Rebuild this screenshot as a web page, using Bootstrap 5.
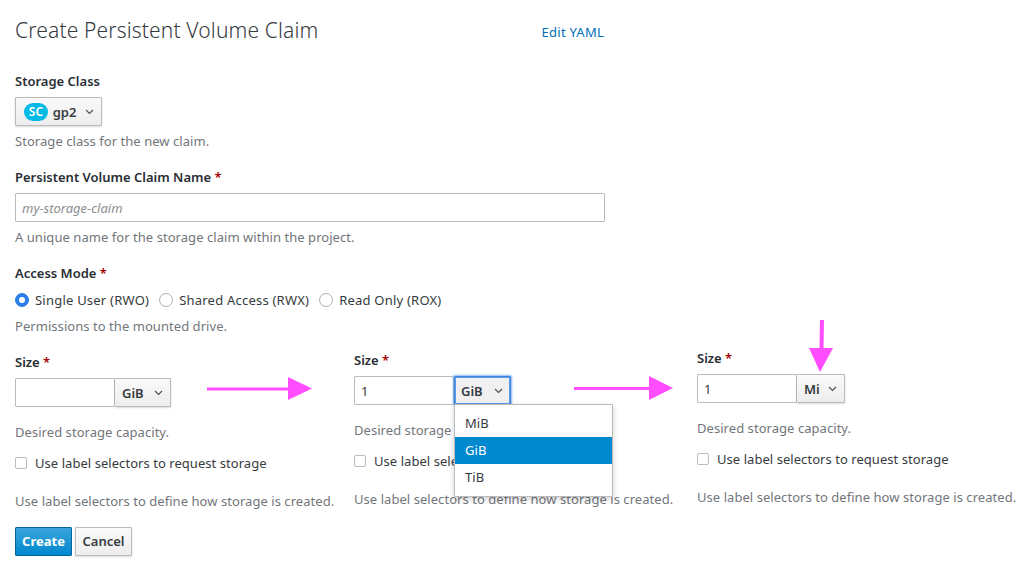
<!DOCTYPE html>
<html lang="en">
<head>
<meta charset="utf-8">
<title>Create Persistent Volume Claim</title>
<link href="https://cdn.jsdelivr.net/npm/bootstrap@5.3.0/dist/css/bootstrap.min.css" rel="stylesheet">
<style>
html,body{height:574px;overflow:hidden}
body{background:#fff;font-family:"Noto Sans","Liberation Sans",sans-serif;font-size:13px;line-height:18px;color:#363b40;position:relative;letter-spacing:.05px}
.pg{padding:0 0 0 15px}
.top-form{width:590px}
.head-row{height:72px;padding-top:16px}
.pg-title{font-size:21px;line-height:28px;font-weight:300;margin:0;color:#363b40;font-family:"Noto Sans",sans-serif;letter-spacing:.15px}
.yaml{color:#0070b8;text-decoration:none;padding-top:7px;letter-spacing:.25px;margin-right:1px}
.fld-label{display:block;font-weight:600;margin:0 0 7px;color:#292e34;line-height:18px;letter-spacing:0}
.req{color:#a30000}
.help{color:#72767b;margin:6px 0 0;line-height:18px}
.blk{margin-bottom:18px}
.drop-btn{height:29px;background:linear-gradient(#fafafa,#ededed);border:1px solid #bbb;border-radius:1px;box-shadow:0 1px 2px rgba(0,0,0,.15);font-size:13px;color:#363b40;font-weight:600;padding:0 7px;display:inline-flex;align-items:center;justify-content:space-between}
.class-btn{width:87px}
.sc-pill{background:#00b9e4;color:#fff;border-radius:10px;width:24px;height:18px;font-size:12px;font-weight:600;display:inline-flex;align-items:center;justify-content:center;margin-left:1px;margin-right:-4px}
.txt-in{height:29px;border:1px solid #bbb;border-radius:1px;font-size:13px;padding:0 6px;box-shadow:none;color:#363b40}
.txt-in::placeholder{font-style:italic;color:#8b8d8f}
.radio-row{height:18px;margin-top:9px}
.radio-row .form-check-input,.chk .form-check-input{margin:0;flex:none}
.radio-txt{margin-left:6px;margin-right:10px;letter-spacing:.22px}
.form-check-input[type=radio]{width:14px;height:14px;border-color:#b0b0b0}
.form-check-input[type=radio]:checked{background-color:#2b7de9;border-color:#2b7de9}
.chk{height:18px;margin-top:13px}
.chk .form-check-input{width:12px;height:12px;border-color:#bbb;border-radius:2px}
.size-row{display:flex}
.sc1{width:339px}
.sc2{width:343px;margin-top:-2px}
.sc3{margin-top:-4px}
.size-in{width:100px;flex:none}
.size-btn{border-left:0;width:56px}
.size-btn-sm{width:48px}
.help-a{margin-top:16px}
.help-b{margin-top:20px}
.actions{margin-top:17px;gap:3px}
.create{height:29px;background:linear-gradient(#39a5dc,#0088ce);border:1px solid #00659c;color:#fff;font-size:13px;font-weight:700;border-radius:1px;padding:0 0 2px;width:57px}
.cancel{height:29px;background:linear-gradient(#fafafa,#ededed);border:1px solid #bbb;color:#363b40;font-size:13px;font-weight:600;border-radius:1px;padding:0 0 2px;width:57px;box-shadow:0 1px 2px rgba(0,0,0,.15)}
.focus-btn{box-shadow:0 0 0 1px #5c9be8 inset,0 0 2px 1px rgba(92,155,232,.7);border-color:#3f86e0;border-left:1px solid #3f86e0;background:#f0f0f0;width:57px;padding-left:6px}
.menu-wrap{position:relative;flex:none}
.pick-menu{display:block;position:absolute;left:0;top:28px;width:159px;margin:0;padding:5px 0;min-width:0;border:1px solid #bbb;border-radius:1px;font-size:13px;box-shadow:0 2px 6px rgba(0,0,0,.18);z-index:5}
.pick-menu .dropdown-item{height:27px;line-height:27px;padding:0 10px;color:#363b40}
.pick-menu .dropdown-item.active{background:#0088ce;color:#fff}
.arrow-layer{position:absolute;left:0;top:0;width:1032px;height:574px;pointer-events:none;z-index:9}
</style>
</head>
<body>
<div class="pg">
  <div class="top-form">
    <div class="head-row d-flex justify-content-between align-items-start">
      <h1 class="pg-title">Create Persistent Volume Claim</h1>
      <a class="yaml" href="#">Edit YAML</a>
    </div>
    <div class="blk">
      <label class="fld-label">Storage Class</label>
      <button type="button" class="drop-btn class-btn"><span class="sc-pill">SC</span><span>gp2</span><svg width="9" height="6" viewBox="0 0 9 6"><path d="M1 1l3.5 3.5L8 1" fill="none" stroke="#4d5258" stroke-width="1.2"/></svg></button>
      <p class="help">Storage class for the new claim.</p>
    </div>
    <div class="blk">
      <label class="fld-label">Persistent Volume Claim Name <span class="req">*</span></label>
      <input class="form-control txt-in" type="text" placeholder="my-storage-claim">
      <p class="help">A unique name for the storage claim within the project.</p>
    </div>
    <div class="blk">
      <label class="fld-label mb-0">Access Mode <span class="req">*</span></label>
      <div class="radio-row d-flex align-items-center">
        <input class="form-check-input" type="radio" name="am" checked><span class="radio-txt">Single User (RWO)</span>
        <input class="form-check-input" type="radio" name="am"><span class="radio-txt">Shared Access (RWX)</span>
        <input class="form-check-input" type="radio" name="am"><span class="radio-txt">Read Only (ROX)</span>
      </div>
      <p class="help" style="margin-top:8px">Permissions to the mounted drive.</p>
    </div>
  </div>
  <div class="size-row">
    <div class="sc1">
      <label class="fld-label">Size <span class="req">*</span></label>
      <div class="d-flex">
        <input class="form-control txt-in size-in" type="text">
        <button type="button" class="drop-btn size-btn">GiB<svg width="9" height="6" viewBox="0 0 9 6"><path d="M1 1l3.5 3.5L8 1" fill="none" stroke="#4d5258" stroke-width="1.2"/></svg></button>
      </div>
      <p class="help help-a">Desired storage capacity.</p>
      <div class="chk d-flex align-items-center"><input class="form-check-input" type="checkbox"><span class="ms-2">Use label selectors to request storage</span></div>
      <p class="help help-b">Use label selectors to define how storage is created.</p>
      <div class="actions d-flex">
        <button type="button" class="create">Create</button>
        <button type="button" class="cancel">Cancel</button>
      </div>
    </div>
    <div class="sc2">
      <label class="fld-label">Size <span class="req">*</span></label>
      <div class="d-flex">
        <input class="form-control txt-in size-in" type="text" value="1">
        <div class="menu-wrap">
          <button type="button" class="drop-btn size-btn focus-btn">GiB<svg width="9" height="6" viewBox="0 0 9 6"><path d="M1 1l3.5 3.5L8 1" fill="none" stroke="#4d5258" stroke-width="1.2"/></svg></button>
          <div class="dropdown-menu pick-menu">
            <a class="dropdown-item" href="#">MiB</a>
            <a class="dropdown-item active" href="#">GiB</a>
            <a class="dropdown-item" href="#">TiB</a>
          </div>
        </div>
      </div>
      <p class="help help-a">Desired storage capacity.</p>
      <div class="chk d-flex align-items-center"><input class="form-check-input" type="checkbox"><span class="ms-2">Use label selectors to request storage</span></div>
      <p class="help help-b">Use label selectors to define how storage is created.</p>
    </div>
    <div class="sc3">
      <label class="fld-label">Size <span class="req">*</span></label>
      <div class="d-flex">
        <input class="form-control txt-in size-in" type="text" value="1">
        <button type="button" class="drop-btn size-btn size-btn-sm">Mi<svg width="9" height="6" viewBox="0 0 9 6"><path d="M1 1l3.5 3.5L8 1" fill="none" stroke="#4d5258" stroke-width="1.2"/></svg></button>
      </div>
      <p class="help help-a">Desired storage capacity.</p>
      <div class="chk d-flex align-items-center"><input class="form-check-input" type="checkbox"><span class="ms-2">Use label selectors to request storage</span></div>
      <p class="help help-b">Use label selectors to define how storage is created.</p>
    </div>
  </div>
</div>
<svg class="arrow-layer" viewBox="0 0 1032 574">
  <g fill="#ff4dff">
    <rect x="207" y="387.5" width="82" height="3"/><polygon points="288,377 312,388.5 288,400"/>
    <rect x="574" y="387" width="76" height="3"/><polygon points="649,376 673,388 649,400"/>
    <polygon points="820,320 824,320 823.5,349 819.5,349"/><polygon points="809,348 833,348 820,372"/>
  </g>
</svg>
<script src="https://cdn.jsdelivr.net/npm/bootstrap@5.3.0/dist/js/bootstrap.bundle.min.js"></script>
</body>
</html>
